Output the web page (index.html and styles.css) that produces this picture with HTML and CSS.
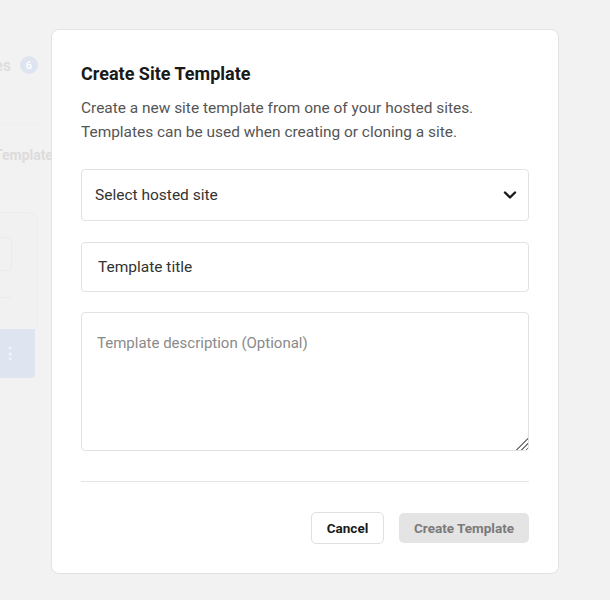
FILE: index.html
```html
<!DOCTYPE html>
<html>
<head>
<meta charset="utf-8">
<link rel="stylesheet" href="styles.css">
</head>
<body>
<div class="page">
  <aside class="behind">
    <div class="bh-head"><span class="bh-title">Sites</span><span class="bh-badge">6</span></div>
    <div class="bh-tabs"><span class="bh-tab">Templates</span></div>
    <div class="bh-card">
      <div class="bh-input"></div>
      <div class="bh-line"></div>
    </div>
    <div class="bh-btn"><span class="bh-dots">⋮</span></div>
  </aside>
</div>

<div class="modal">
  <h2 class="m-title">Create Site Template</h2>
  <p class="m-desc">Create a new site template from one of your hosted sites.<br>Templates can be used when creating or cloning a site.</p>
  <div class="field select">
    <span>Select hosted site</span>
    <svg class="chev" width="14" height="10" viewBox="0 0 14 10"><path d="M2 2.5 L7 7.5 L12 2.5" fill="none" stroke="#1a1a1a" stroke-width="2.4" stroke-linecap="round" stroke-linejoin="round"/></svg>
  </div>
  <input class="field input" type="text" value="Template title">
  <div class="area-wrap">
    <textarea class="field area" placeholder="Template description (Optional)"></textarea>
    <span class="grip"></span>
  </div>
  <hr class="divider">
  <div class="actions">
    <button class="btn cancel">Cancel</button>
    <button class="btn create">Create Template</button>
  </div>
</div>
</body>
</html>
```

FILE: styles.css
```css
html, body {
  margin: 0;
  padding: 0;
}
body {
  width: 610px;
  height: 600px;
  background: #f2f2f2;
  font-family: Roboto, "Liberation Sans", sans-serif;
  overflow: hidden;
  position: relative;
}
.page {
  display: flex;
}
.behind {
  width: 100px;
  margin-left: -62px;
  display: flex;
  flex-direction: column;
  color: #dcdcdc;
}
.bh-head {
  display: flex;
  align-items: center;
  justify-content: flex-end;
  gap: 9px;
  height: 40px;
  margin-top: 45px;
  font-size: 16px;
  font-weight: 500;
}
.bh-badge {
  width: 18px;
  height: 18px;
  border-radius: 50%;
  background: #dee5f1;
  color: #fff;
  font-size: 11px;
  display: flex;
  align-items: center;
  justify-content: center;
  flex: none;
}
.bh-tabs {
  margin-top: 38px;
  border-top: 1px solid #efefef;
  padding: 23px 0 0 56px;
  height: 65px;
  font-size: 14px;
  font-weight: 700;
}
.bh-tab { white-space: nowrap; }
.bh-card {
  height: 117px;
  width: 100px;
  border: 1px solid #ededed;
  border-bottom: none;
  border-radius: 8px 8px 0 0;
  background: #f1f1f1;
  box-sizing: border-box;
  padding: 24px 0 0 0;
}
.bh-input {
  width: 73px;
  height: 34px;
  border: 1px solid #ebebeb;
  border-radius: 4px;
  box-sizing: border-box;
}
.bh-line {
  margin-top: 26px;
  width: 73px;
  height: 1px;
  background: #ebebeb;
}
.bh-btn {
  width: 97px;
  height: 49px;
  background: #dee5f1;
  border-radius: 0 0 4px 4px;
  display: flex;
  align-items: center;
  justify-content: flex-end;
  padding-right: 17px;
  box-sizing: border-box;
  color: #f3f5fa;
  font-size: 16px;
  font-weight: 700;
}

.modal {
  position: absolute;
  left: 51px;
  top: 29px;
  width: 508px;
  height: 545px;
  box-sizing: border-box;
  background: #fff;
  border: 1px solid #e3e3e3;
  border-radius: 8px;
  padding: 30px 29px 29px;
  display: flex;
  flex-direction: column;
}
.m-title {
  margin: 0;
  font-size: 18px;
  font-weight: 700;
  color: #1a1a1a;
  line-height: 28px;
}
.m-desc {
  margin: 8px 0 0;
  font-size: 15.45px;
  line-height: 24px;
  color: #555;
}
.field {
  box-sizing: border-box;
  width: 448px;
  border: 1px solid #e2e2e2;
  border-radius: 4px;
  font-family: inherit;
  font-size: 15.5px;
  color: #333;
  background: #fff;
  margin: 0;
}
.select {
  margin-top: 25px;
  height: 52px;
  display: flex;
  align-items: center;
  justify-content: space-between;
  padding: 0 11px 0 13px;
}
.chev { display: block; }
.input {
  margin-top: 21px;
  height: 50px;
  padding: 0 16px;
  outline: none;
}
.area-wrap {
  position: relative;
  margin-top: 20px;
  width: 448px;
}
.area {
  height: 139px;
  padding: 21px 15px;
  resize: none;
  display: block;
  outline: none;
  line-height: 18px;
  font-size: 15px;
}
.area::placeholder { color: #8a8a8a; }
.grip {
  position: absolute;
  right: 1px;
  bottom: 1px;
  width: 15px;
  height: 15px;
  background: repeating-linear-gradient(135deg, transparent 0 2.1px, #7d7d7d 2.1px 3.4px);
  clip-path: polygon(100% 0, 100% 100%, 0 100%);
}
.divider {
  margin: 30px 0 0;
  border: none;
  border-top: 1px solid #e4e4e4;
  height: 0;
  width: 448px;
}
.actions {
  margin-top: 30px;
  display: flex;
  justify-content: flex-end;
  align-items: center;
  gap: 15px;
}
.btn {
  font-family: inherit;
  font-size: 13.5px;
  font-weight: 700;
  border-radius: 5px;
  cursor: pointer;
  padding: 0;
}
.cancel {
  height: 32px;
  width: 73px;
  background: #fff;
  border: 1px solid #e0e0e0;
  color: #1a1a1a;
}
.create {
  height: 30px;
  width: 130px;
  background: #e4e4e4;
  border: none;
  color: #7a7a7a;
}
```
